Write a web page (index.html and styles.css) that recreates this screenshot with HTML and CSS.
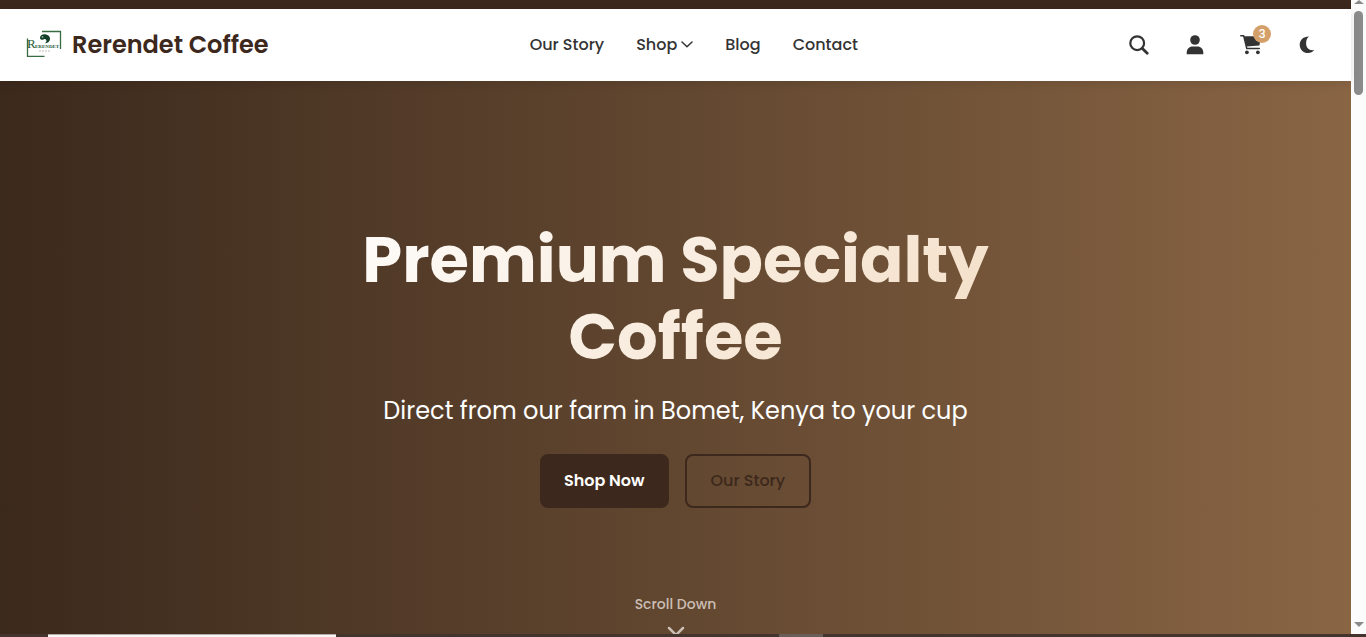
FILE: index.html
```html
<!DOCTYPE html>
<html lang="en">
<head>
<meta charset="utf-8">
<meta name="viewport" content="width=device-width, initial-scale=1">
<title>Rerendet Coffee</title>
<link rel="stylesheet" href="styles.css">
</head>
<body>
<div class="shell">
  <div class="page">
    <div class="topbar"></div>
    <header class="header">
      <a class="brand" href="#">
        <svg class="brand-logo" viewBox="0 0 40 40" aria-hidden="true">
          <path d="M18 7.500H36.500V25" fill="none" stroke="#386b41" stroke-width="1.300"/>
          <path d="M3.500 14.500V32.300H20.500" fill="none" stroke="#386b41" stroke-width="1.300"/>
          <path d="M16 14c0-3 3-4.200 6-3.500 4 .9 5 4.500 3 7-1 1.300-2.500 1.800-4 1.700 1.700-1.200 2-3 .6-4-1.500-1-2.600.8-4 .5-1-.2-1.600-.9-1.600-1.700z" fill="#123f27"/>
          <circle cx="18.500" cy="13" r="1" fill="#7fa288"/>
          <text x="3" y="24" class="logo-initial">R</text>
          <text x="11" y="24" class="logo-name">ERENDET</text>
          <path d="M15.500 27h11" stroke="#8d7b5d" stroke-width="1" stroke-dasharray="1 2"/>
        </svg>
        <span class="brand-name">Rerendet Coffee</span>
      </a>
      <nav class="nav" aria-label="Main">
        <a href="#story">Our Story</a>
        <a href="#shop">Shop
          <svg class="caret" viewBox="0 0 12 12" aria-hidden="true"><path d="M1 4l5 4.700L11 4" fill="none" stroke="currentColor" stroke-width="1.500" stroke-linecap="round" stroke-linejoin="round"/></svg>
        </a>
        <a href="#blog">Blog</a>
        <a href="#contact">Contact</a>
      </nav>
      <div class="actions">
        <button class="icon-btn" type="button" aria-label="Search">
          <svg viewBox="0 0 20 20"><circle cx="8.200" cy="8.200" r="6.900" fill="none" stroke="currentColor" stroke-width="2.200"/><path d="M13.400 13.400l4.800 4.800" stroke="currentColor" stroke-width="2.800" stroke-linecap="round"/></svg>
        </button>
        <button class="icon-btn" type="button" aria-label="Account">
          <svg viewBox="0 0 20 20" fill="currentColor"><circle cx="10" cy="5" r="4.800"/><path d="M1.700 19.200v-1.400c0-4 2.600-6.300 5.800-6.300h5c3.200 0 5.800 2.300 5.800 6.300v1.400z"/></svg>
        </button>
        <button class="icon-btn" type="button" aria-label="Cart, 3 items">
          <svg class="cart" viewBox="0 0 22 22" fill="currentColor"><path d="M.8 1.700h2.900l3.100 12.900h12.500" fill="none" stroke="currentColor" stroke-width="1.500" stroke-linecap="round" stroke-linejoin="round"/><path d="M4 2.300h17.300l-1.900 9.200-12.900.9z"/><circle cx="6.900" cy="18.300" r="1.900"/><circle cx="17.900" cy="18.300" r="1.900"/></svg>
          <span class="badge">3</span>
        </button>
        <button class="icon-btn" type="button" aria-label="Dark mode">
          <svg viewBox="0 0 20 20" fill="currentColor"><path d="M12 1.600C6.800 1.400 2.700 5 2.700 9.800c0 4.700 3.700 8.300 8.400 8.300 2.500 0 4.700-1 6.100-3-5 .9-8.100-2-8.100-6.800 0-2.800.9-5.200 2.900-6.700z"/></svg>
        </button>
      </div>
    </header>
    <main class="hero">
      <div class="hero-content">
        <h1>Premium Specialty Coffee</h1>
        <p>Direct from our farm in Bomet, Kenya to your cup</p>
        <div class="cta">
          <a class="btn btn-solid" href="#shop">Shop Now</a>
          <a class="btn btn-outline" href="#story">Our Story</a>
        </div>
      </div>
      <a class="scroll-hint" href="#next">Scroll Down
        <svg viewBox="0 0 20 12" aria-hidden="true"><path d="M3 2l7 7 7-7" fill="none" stroke="currentColor" stroke-width="2.500" stroke-linecap="round"/></svg>
      </a>
    </main>
  </div>
  <div class="scrollbar" aria-hidden="true">
    <span class="arrow arrow-up"></span>
    <span class="thumb"></span>
    <span class="arrow arrow-down"></span>
  </div>
</div>
<div class="edge" aria-hidden="true"><span class="edge-light"></span><span class="edge-tab"></span></div>
</body>
</html>
```
FILE: styles.css
```css
* { box-sizing: border-box; }

body {
  margin: 0;
  height: 100vh;
  display: flex;
  flex-direction: column;
  overflow: hidden;
  font-family: Poppins, Inter, "Open Sans", sans-serif;
  font-size: 16px;
  color: #333;
}

a { color: inherit; text-decoration: none; }

.shell { flex: 1; min-height: 0; display: flex; }

.page { flex: 1; min-width: 0; display: flex; flex-direction: column; }

.topbar { height: 9px; background: #3c281c; }

.header {
  position: relative;
  z-index: 1;
  height: 72px;
  padding: 0 24px;
  display: flex;
  align-items: center;
  justify-content: space-between;
  background: #fff;
  box-shadow: 0 2px 10px rgba(0, 0, 0, 0.1);
}

.brand { display: flex; align-items: center; gap: 8px; padding-bottom: 2px; }
.brand-logo { width: 40px; height: 40px; }
.logo-initial { font: 13px "Liberation Serif", serif; fill: #255b35; }
.logo-name { font: bold 5px "Liberation Serif", serif; fill: #255b35; }
.brand-name { font-size: 24px; font-weight: 600; color: #3c281c; white-space: nowrap; }

.nav { display: flex; gap: 32px; padding-bottom: 2px; font-weight: 500; white-space: nowrap; }
.nav a { display: flex; align-items: center; gap: 4px; }
.caret { width: 12px; height: 12px; }

.actions { display: flex; gap: 16px; }
.icon-btn {
  position: relative;
  width: 40px;
  height: 40px;
  padding: 0;
  border: 0;
  background: none;
  color: #333;
  display: grid;
  place-items: center;
}
.icon-btn svg { width: 20px; height: 20px; }
.icon-btn .cart { width: 22px; height: 22px; }
.badge {
  position: absolute;
  top: 0;
  right: 0;
  width: 18px;
  height: 18px;
  border-radius: 50%;
  background: #d4a06a;
  color: #fff;
  font: 500 12px/18px Poppins, Inter, sans-serif;
  text-align: center;
}

.hero {
  position: relative;
  flex: 1;
  min-height: 0;
  overflow: hidden;
  display: flex;
  align-items: center;
  justify-content: center;
  padding-top: 13px;
  background: linear-gradient(90deg, #3b291c, #896544);
  text-align: center;
}

.hero-content { width: 800px; max-width: 100%; }

h1 {
  margin: 0 0 17px;
  font-size: 64px;
  font-weight: 700;
  line-height: 77px;
  color: transparent;
  background: linear-gradient(135deg, #fff, #f2dabf);
  background-clip: text;
  -webkit-background-clip: text;
}

.hero p { margin: 0 0 24px; font-size: 24px; line-height: 38px; color: #fff; }

.cta { display: flex; justify-content: center; gap: 16px; }
.btn {
  padding: 12px 22px;
  border: 2px solid #3c281c;
  border-radius: 8px;
  line-height: 26px;
}
.btn-solid { background: #3c281c; color: #fff; font-weight: 600; }
.btn-outline { padding: 12px 24px; color: #3c281c; font-weight: 500; }

.scroll-hint {
  position: absolute;
  left: 0;
  right: 0;
  bottom: -4px;
  display: flex;
  flex-direction: column;
  align-items: center;
  gap: 11px;
  font-size: 14px;
  font-weight: 500;
  line-height: 22px;
  color: #cbbfb5;
}
.scroll-hint svg { width: 20px; height: 12px; }

.scrollbar {
  width: 15px;
  display: flex;
  flex-direction: column;
  align-items: center;
  background: #fcfcfc;
}
.arrow { border: 5px solid transparent; }
.arrow-up { height: 4px; border-top: 0; border-bottom: 4px solid #8b8b8b; }
.thumb { width: 9px; height: 84px; margin-top: 7px; border-radius: 5px; background: #8b8b8b; }
.arrow-down { margin-top: auto; margin-bottom: 7px; border-top: 5px solid #8b8b8b; border-bottom: 0; }

.edge { height: 3px; flex: none; display: flex; background: #43352e; }
.edge-light { width: 288px; margin-left: 48px; background: #f8f5f5; border-top: 1px solid #b5adaa; }
.edge-tab { width: 44px; margin-left: 443px; background: #6a5f58; }
```
